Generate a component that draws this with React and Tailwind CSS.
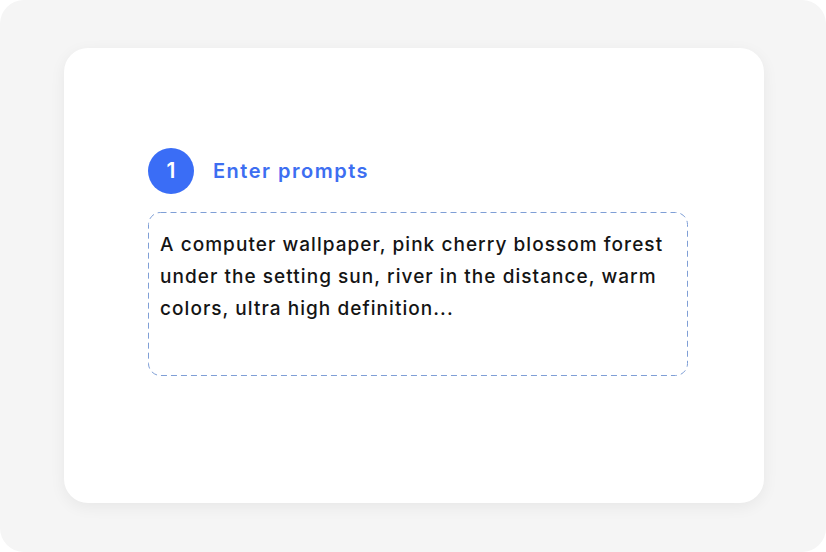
export default function App() {
  return (
    <div className="w-[826px] h-[552px] bg-white">
      <div className="w-full h-full rounded-[24px] bg-[#f5f5f5] pt-[48px] pl-[64px]" style={{ fontFamily: 'Inter, "Noto Sans", sans-serif' }}>
        <div className="w-[700px] h-[455px] rounded-[24px] bg-white shadow-[0_4px_16px_rgba(0,0,0,0.06)] pt-[100px] pl-[84px]">
          <div className="flex items-center gap-[19px]">
            <div className="w-[46px] h-[46px] rounded-full bg-[#3a6df6] flex items-center justify-center text-white text-[21px] font-semibold">1</div>
            <div className="text-[#3d6ef1] text-[20px] font-semibold tracking-[1.5px]">Enter prompts</div>
          </div>
          <div className="relative mt-[18px] w-[540px] h-[164px] px-[12px] pt-[17px] text-[19px] leading-[32px] tracking-[1.05px] font-medium text-[#141414]">
            <svg className="absolute inset-0 pointer-events-none" width="540" height="164">
              <rect x="0.5" y="0.5" width="539" height="163" rx="12" ry="12" fill="none" stroke="#7f9fd6" strokeWidth="1" strokeDasharray="6 4" />
            </svg>
            A computer wallpaper, pink cherry blossom forest<br />
            under the setting sun, river in the distance, warm<br />
            colors, ultra high definition...
          </div>
        </div>
      </div>
    </div>
  );
}
